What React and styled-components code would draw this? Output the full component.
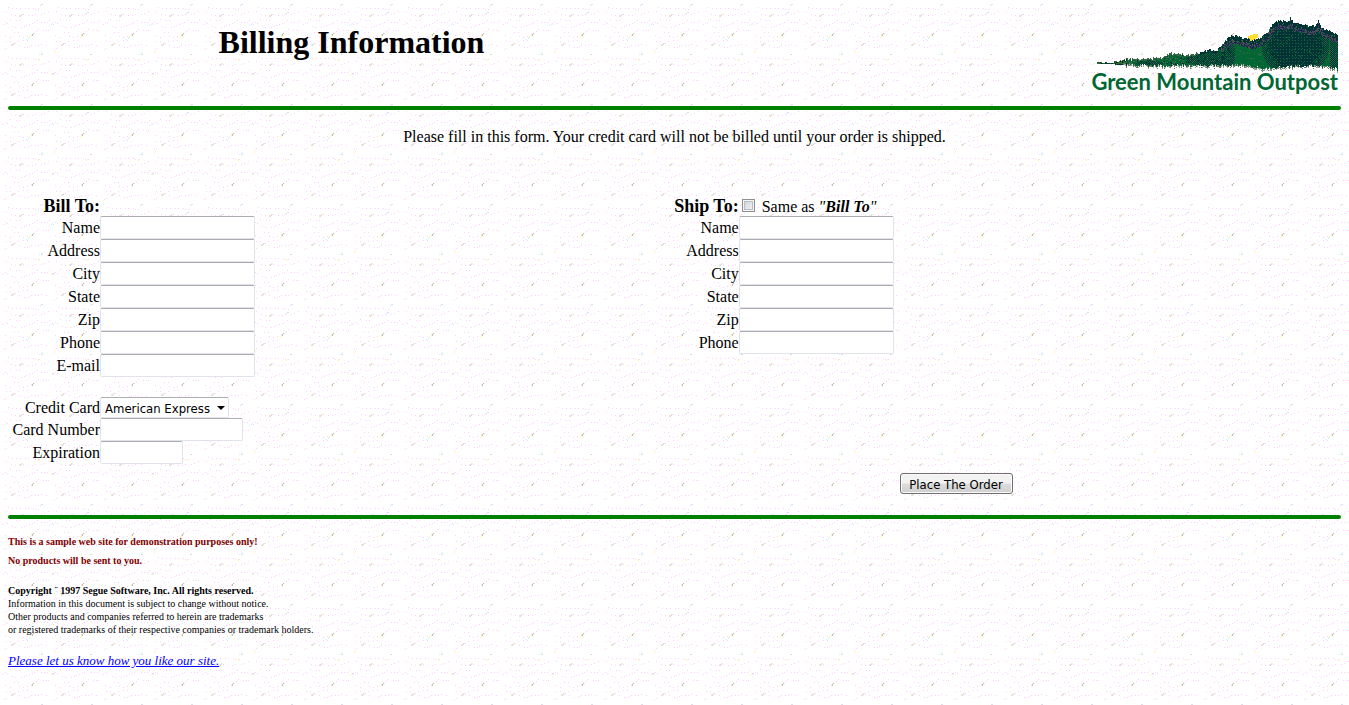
import React from 'react';
import styled, { createGlobalStyle, css } from 'styled-components';

/* Speckled paper tile, 100 x 100, built from a 50 px cell of faint dots. */
const pinkDots = [
  [8, 7], [12, 8], [16, 8], [20, 8], [25, 8], [28, 8], [33, 8], [35, 9], [38, 9], [6, 11],
  [11, 14], [15, 15], [23, 14], [28, 15], [32, 15], [35, 14], [41, 14], [44, 13], [48, 11],
  [3, 24], [5, 22], [7, 23], [10, 19], [16, 20], [19, 20],
  [12, 26], [15, 27], [21, 27], [24, 26], [26, 25], [29, 24], [32, 23], [34, 22], [37, 20],
  [41, 22], [44, 22], [47, 22], [49, 20], [5, 35], [10, 37], [19, 36], [23, 37], [27, 36],
  [14, 32], [18, 32], [34, 33], [36, 31], [38, 29], [43, 30], [46, 30], [48, 30],
  [6, 41], [10, 41], [15, 43], [18, 41], [23, 40], [27, 40],
  [19, 45], [24, 47], [27, 47], [29, 46], [31, 45], [35, 45], [38, 45], [41, 44], [46, 45],
  [4, 49], [6, 48],
];

const dot = ([x, y], dx = 0, dy = 0) => `M${x + dx} ${y + dy}h1v1h-1z`;
const cells = [[0, 0], [50, 0], [0, 50], [50, 50]];
const spread = (dots, at) => at.map(([dx, dy]) => dots.map((d) => dot(d, dx, dy)).join('')).join('');
const flecks = [[20, 15], [70, 15], [12, 44], [62, 44], [20, 64], [70, 64], [12, 94], [62, 94]];
const darkFlecks = [[32, 34], [82, 34], [32, 84], [82, 84]];

const tile = [
  ['#ffd0ff', spread(pinkDots, cells)],
  ['#ebe9c8', spread([[0, 0], [1, -1], [-1, 1]], [...flecks, ...darkFlecks])],
  ['#dcd8e2', spread([[0, 1], [1, 0]], flecks)],
  ['#f6e6f0', spread([[2, -1], [-1, 0]], [...flecks, ...darkFlecks])],
  ['#c4bcac', spread([[0, 0], [0, 1], [1, -1]], darkFlecks)],
  ['#dcdcfa', spread([[0, 0], [1, 0], [-1, 1]], [[41, 4], [91, 4], [87, 12]])],
  ['#ccf2ff', spread([[0, 0], [1, -1], [-2, 1]], [[51, 24], [28, 38], [41, 53]])],
  ['#fff4a8', spread([[0, 0], [1, -1]], [[54, 52], [38, 60], [86, 60], [51, 74], [30, 36], [80, 37]])],
  ['#dcdcd8', spread([[0, 0], [1, 0]], [[41, 54], [90, 54], [52, 73]])],
];

const paper = `data:image/svg+xml,${encodeURIComponent(
  `<svg xmlns="http://www.w3.org/2000/svg" width="100" height="100" shape-rendering="crispEdges">${tile
    .map(([fill, d]) => `<path fill="${fill}" d="${d}"/>`)
    .join('')}</svg>`
)}`;

const GlobalStyle = createGlobalStyle`
  body {
    margin: 0;
    background: #fff url("${paper}");
    color: #000;
    font: 16px/20px "Liberation Serif", "Times New Roman", serif;
  }
`;

const Page = styled.div`
  padding: 8px;
`;

const Header = styled.header`
  display: grid;
  grid-template-columns: 687fr 646fr;
  height: 98px;
`;

const Title = styled.h1`
  margin: 16px 0 0;
  text-align: center;
  font-size: 32px;
  line-height: 37px;
`;

const Logo = styled.div`
  display: flex;
  flex-direction: column;
  align-items: flex-end;
  margin: 8px 3px 0 0;
  color: #006633;
  font: bold 22px/26px Lato, "Liberation Sans", sans-serif;
  white-space: nowrap;
`;

const Wordmark = styled.div`
  margin-top: -4px;
`;

const Rule = styled.hr`
  height: 4px;
  margin: 0;
  border: 0;
  border-radius: 2px;
  background: #008000;
`;

const Intro = styled.p`
  margin: 17px 0 50px;
  text-align: center;
`;

const Columns = styled.div`
  display: grid;
  grid-template-columns: 23fr 25fr;
`;

const Fields = styled.div`
  & + & {
    margin-top: 20px;
  }
`;

const Row = styled.div`
  display: grid;
  grid-template-columns: 92px 1fr;
  align-items: center;
  justify-items: start;

  > :first-child {
    justify-self: end;
    white-space: nowrap;
  }
`;

const Heading = styled.h2`
  margin: 0;
  font-size: 18px;
  line-height: 19px;
`;

const fieldBox = css`
  box-sizing: border-box;
  border: 1px solid #e2e3ea;
  border-top-color: #abadb3;
  border-radius: 2px;
  background-color: #fff;
  color: #000;
  font: 13px "DejaVu Sans Condensed", "DejaVu Sans", Tahoma, sans-serif;
`;

const TextInput = styled.input`
  ${fieldBox}
  width: ${(p) => p.$width || 155}px;
  height: 23px;
  margin: 0;
  padding: 2px 4px;
`;

const SelectWrap = styled.div`
  position: relative;

  svg {
    position: absolute;
    right: 4px;
    top: 9px;
    pointer-events: none;
  }
`;

const Select = styled.select`
  ${fieldBox}
  display: block;
  appearance: none;
  width: 129px;
  height: 21px;
  padding: 1px 4px 0;
`;

const SameAs = styled.label`
  display: flex;
  align-items: center;
  gap: 7px;
  height: 19px;
  margin-left: 3px;
`;

const Checkbox = styled.input`
  appearance: none;
  box-sizing: border-box;
  width: 13px;
  height: 13px;
  margin: 0 0 3px;
  border: 1px solid #8e8f8f;
  background: linear-gradient(135deg, #cbcfd5, #f6f6f6);
  box-shadow: inset 0 0 0 1px #f4f4f4, inset 0 0 0 2px #b9bdc4;

  &:checked {
    background: #4b6a9b;
  }
`;

const Actions = styled.div`
  display: grid;
  grid-template-columns: 563fr 770fr;
  margin: 9px 0 21px;
`;

const OrderButton = styled.button`
  grid-column: 2;
  justify-self: center;
  box-sizing: border-box;
  width: 113px;
  height: 21px;
  padding: 1px 0 0;
  border: 1px solid #707070;
  border-radius: 3px;
  background: linear-gradient(#f2f2f2 0 48%, #dddddd 52%, #cfcfcf);
  box-shadow: inset 0 0 0 1px #fafafa;
  color: #000;
  font: 13px "DejaVu Sans Condensed", "DejaVu Sans", Tahoma, sans-serif;
`;

const Footer = styled.footer`
  padding-top: 13px;
  font-size: 10px;
  line-height: 13px;
`;

const Notice = styled.p`
  margin: 0 0 14px;
  color: #800000;
  font-weight: bold;
  line-height: 19px;
`;

const Legal = styled.p`
  margin: 0 0 16px;
`;

const Feedback = styled.a`
  color: #0000ff;
  font-size: 13px;
  font-style: italic;
  line-height: 18px;
`;

/* Dithered mountain range: outlines of its top and bottom edges, filled pixel by pixel. */
const ridge = [
  [0, 46], [13, 46], [31, 43], [55, 42], [66, 41], [73, 37], [91, 38], [105, 36], [111, 33],
  [119, 35], [125, 27], [131, 21], [138, 19], [148, 22], [156, 24], [163, 21], [170, 16],
  [175, 8], [180, 4], [190, 5], [193, 2], [197, 6], [215, 10], [218, 9], [221, 5], [225, 12],
  [235, 16], [241, 17],
];
const base = [[0, 47], [13, 47], [30, 49], [60, 50], [120, 50], [150, 50], [165, 53], [185, 52], [205, 50], [230, 51], [241, 54]];

const heightAt = (points, x) => {
  const i = Math.max(1, points.findIndex(([px]) => px >= x));
  const [x0, y0] = points[i - 1];
  const [x1, y1] = points[i];
  return y0 + ((y1 - y0) * (x - x0)) / (x1 - x0);
};

const noise = (x, y) => {
  const n = Math.sin(x * 127.1 + y * 311.7) * 43758.5453;
  return n - Math.floor(n);
};

const near = (x, y, cx, cy, rx, ry) => Math.max(0, 1 - ((x - cx) / rx) ** 2 - ((y - cy) / ry) ** 2);

const colourAt = (x, y, top, bottom) => {
  const depth = y - top;
  const n = noise(x, y);
  const checker = (x + y) % 2 === 0;
  if (bottom - y < 3 && x > 25) return n < 0.35 ? null : n < 0.7 ? '#99aa99' : '#667766';
  if (depth < 1 && n < 0.4) return null;
  if (x < 30) return n < 0.5 ? '#003333' : '#336633';
  if (x < 125) {
    if (depth < 2) return x > 100 ? '#003333' : '#336644';
    const shade = near(x, y, 112, 42, 26, 9) + near(x, y, 52, 47, 18, 4) * 0.5;
    if (shade > 0.2 && checker) return '#003333';
    return n < 0.14 ? '#556655' : n < 0.25 ? '#003333' : '#006633';
  }
  if (depth < 5) return n < 0.07 ? '#665577' : n < 0.14 ? '#336633' : '#003333';
  if (depth < 9) return n < 0.25 ? '#332266' : n < 0.5 ? '#335544' : n < 0.75 ? '#003333' : '#554466';
  const dark = near(x, y, 198, 30, 34, 30) + near(x, y, 126, 38, 12, 16) * 0.4;
  if (dark > 0.2 + n * 0.3) return x % 3 === 0 && y % 3 === 0 ? '#335544' : n < 0.06 ? '#006633' : '#003333';
  if (dark > 0.02 || x > 232) return checker ? '#003333' : n < 0.3 ? '#445555' : '#006633';
  return n < 0.1 ? '#336644' : '#006633';
};

const mountain = {};
for (let x = 0; x < 241; x += 1) {
  const top = Math.round(heightAt(ridge, x) + (x > 25 ? noise(x, 7) * 2 - 1 : 0));
  const bottom = Math.round(heightAt(base, x) + (x > 25 ? noise(x, 9) * 3 : 1));
  for (let y = top; y < bottom; y += 1) {
    const fill = colourAt(x, y, top, bottom);
    if (fill) mountain[fill] = (mountain[fill] || '') + dot([x, y]);
  }
}

function Mountain() {
  return (
    <svg width="241" height="57" viewBox="0 0 241 57" shapeRendering="crispEdges" aria-hidden="true">
      <path fill="#ffdd33" d="M151 20h2v-1h3v-1h5v4h-2v2h-3v2h-4v-3h-1z" />
      {Object.entries(mountain).map(([fill, d]) => (
        <path key={fill} fill={fill} d={d} />
      ))}
    </svg>
  );
}

function Field({ label, name, width }) {
  return (
    <Row>
      <label htmlFor={name}>{label}</label>
      <TextInput id={name} name={name} type="text" $width={width} />
    </Row>
  );
}

const address = ['Name', 'Address', 'City', 'State', 'Zip', 'Phone'];

export default function App() {
  return (
    <Page>
      <GlobalStyle />
      <Header>
        <Title>Billing Information</Title>
        <Logo>
          <Mountain />
          <Wordmark>Green Mountain Outpost</Wordmark>
        </Logo>
      </Header>
      <Rule />
      <form onSubmit={(e) => e.preventDefault()}>
        <Intro>Please fill in this form. Your credit card will not be billed until your order is shipped.</Intro>
        <Columns>
          <div>
            <Fields>
              <Row>
                <Heading>Bill To:</Heading>
              </Row>
              {[...address, 'E-mail'].map((label) => (
                <Field key={label} label={label} name={`bill-${label}`} />
              ))}
            </Fields>
            <Fields>
              <Row>
                <label htmlFor="card-type">Credit Card</label>
                <SelectWrap>
                  <Select id="card-type" name="card-type">
                    <option>American Express</option>
                  </Select>
                  <svg width="8" height="4" viewBox="0 0 8 4" aria-hidden="true">
                    <path d="M0 0h8L4 4z" />
                  </svg>
                </SelectWrap>
              </Row>
              <Field label="Card Number" name="card-number" width={143} />
              <Field label="Expiration" name="expiration" width={83} />
            </Fields>
          </div>
          <Fields>
            <Row>
              <Heading>Ship To:</Heading>
              <SameAs>
                <Checkbox type="checkbox" name="same-as-bill" />
                <span>
                  Same as <em>"<b>Bill To</b>"</em>
                </span>
              </SameAs>
            </Row>
            {address.map((label) => (
              <Field key={label} label={label} name={`ship-${label}`} />
            ))}
          </Fields>
        </Columns>
        <Actions>
          <OrderButton type="submit">Place The Order</OrderButton>
        </Actions>
      </form>
      <Rule />
      <Footer>
        <Notice>
          This is a sample web site for demonstration purposes only!
          <br />
          No products will be sent to you.
        </Notice>
        <Legal>
          <b>Copyright ¨ 1997 Segue Software, Inc. All rights reserved.</b>
          <br />
          Information in this document is subject to change without notice.
          <br />
          Other products and companies referred to herein are trademarks
          <br />
          or registered trademarks of their respective companies or trademark holders.
        </Legal>
        <Feedback href="#feedback">Please let us know how you like our site.</Feedback>
      </Footer>
    </Page>
  );
}
